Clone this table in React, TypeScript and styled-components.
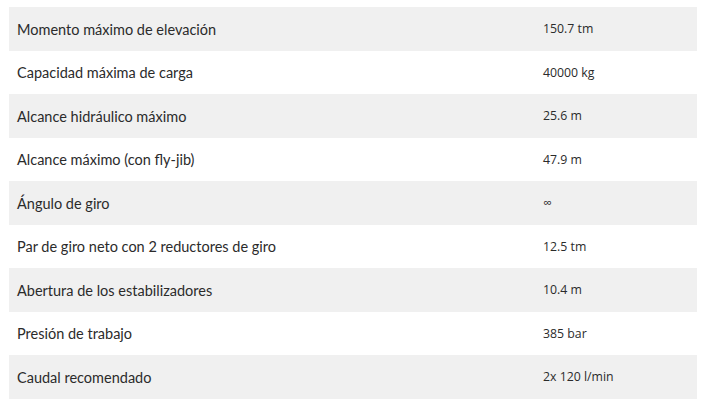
import * as React from 'react';
import styled, { createGlobalStyle } from 'styled-components';

const GlobalStyle = createGlobalStyle`
  body {
    margin: 0;
    background: #ffffff;
  }
`;

const specs = [
  ['Momento máximo de elevación', '150.7 tm'],
  ['Capacidad máxima de carga', '40000 kg'],
  ['Alcance hidráulico máximo', '25.6 m'],
  ['Alcance máximo (con fly-jib)', '47.9 m'],
  ['Ángulo de giro', '∞'],
  ['Par de giro neto con 2 reductores de giro', '12.5 tm'],
  ['Abertura de los estabilizadores', '10.4 m'],
  ['Presión de trabajo', '385 bar'],
  ['Caudal recomendado', '2x 120 l/min'],
];

const Page = styled.div`
  padding: 7px 12px 0 9px;
`;

const Table = styled.div`
  display: flex;
  flex-direction: column;
  width: 688px;
`;

const Row = styled.div<{ $shaded: boolean }>`
  display: grid;
  grid-template-columns: 526px 1fr;
  align-items: center;
  height: 43.5px;
  padding-left: 8px;
  background: ${(p) => (p.$shaded ? '#f0f0f0' : '#ffffff')};
`;

const Label = styled.div`
  font-family: Lato, 'Noto Sans', sans-serif;
  font-size: 14.5px;
  color: #2b2b2b;
  padding-top: 1px;
`;

const Value = styled.div`
  font-family: 'Open Sans', 'Noto Sans', sans-serif;
  font-size: 12.3px;
  color: #2b2b2b;
`;

export default function App() {
  return (
    <Page>
      <GlobalStyle />
      <Table>
        {specs.map(([label, value], i) => (
          <Row key={label} $shaded={i % 2 === 0}>
            <Label>{label}</Label>
            <Value>{value}</Value>
          </Row>
        ))}
      </Table>
    </Page>
  );
}
